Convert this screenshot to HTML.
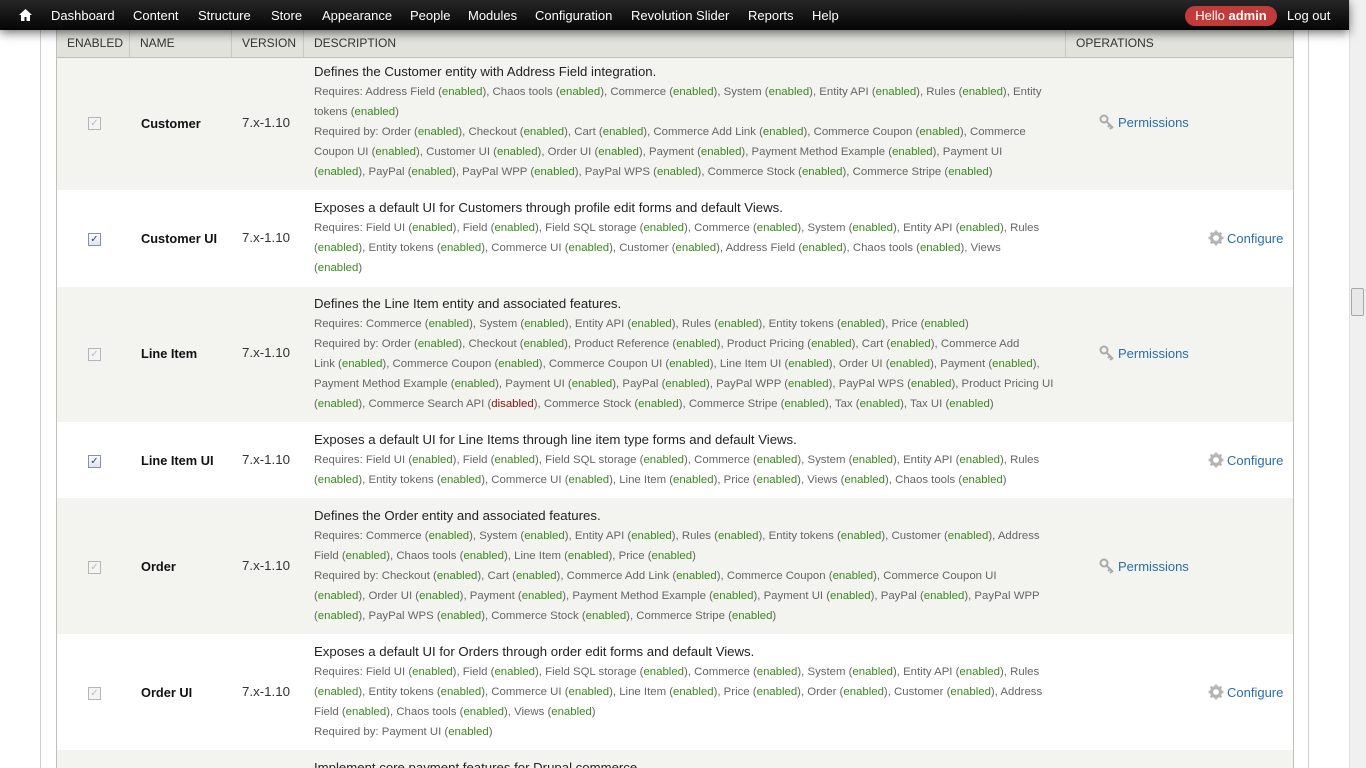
<!DOCTYPE html>
<html><head><meta charset="utf-8">
<style>
*{margin:0;padding:0;box-sizing:border-box}
html,body{width:1366px;height:768px;overflow:hidden}
body{background:#fff;font-family:"Liberation Sans","DejaVu Sans",sans-serif;position:relative;color:#333}
#tb{position:absolute;left:0;top:0;width:1349px;height:30px;background:linear-gradient(#262626,#050505);box-shadow:0 3px 10px rgba(0,0,0,.55);z-index:5}
#tb a{position:absolute;top:8px;color:#fff;font-size:13px;text-decoration:none;white-space:nowrap}
#hello{position:absolute;left:1185px;top:6px;width:92px;height:20px;border-radius:10px;background:#c23b3b;color:#fff;font-size:13px;line-height:20px;text-align:center}
#sb{position:absolute;left:1349px;top:0;width:17px;height:768px;background:#f0f0f0;border-left:1px solid #e0e0e0}
#thumb{position:absolute;left:1351px;top:288px;width:13px;height:28px;background:#e8e8e8;border:1px solid #a8a8a8;border-radius:2px}
.vl{position:absolute;top:0;height:768px;width:1px;background:#cfcfcf}
#hdr{position:absolute;left:56px;top:30px;width:1238px;height:28px;background:#e2e2dd;border:1px solid #bebfb9;border-top:none}
#hdr div{position:absolute;top:0;height:27px;line-height:27px;font-size:12px;color:#333;padding-left:10px;border-right:1px solid #c8c8c2}
.row{position:absolute;left:56px;width:1238px;border-left:1px solid #bebfb9;border-right:1px solid #bebfb9;overflow:hidden}
.g{background:#f3f3ef}.w{background:#fff}
.cb{position:absolute;left:31px;width:13px;height:13px;border:1px solid #b5b5b5;background:#f4f4f4;font-size:10px;line-height:11px;text-align:center;color:#bbb}
.cb.on{border-color:#8a8fa8;background:linear-gradient(#fff,#dfe3ee);color:#2a3d8f;font-weight:bold}
.nm{position:absolute;left:84px;font-size:12.8px;font-weight:bold;color:#111}
.ver{position:absolute;left:185px;font-size:13.3px;color:#333}
.d{position:absolute;left:257px;white-space:nowrap;line-height:20px;font-size:11.4px;color:#666}
.d b{font-weight:normal;font-size:13.2px;color:#222;display:block}
i{font-style:normal;color:#3a8a1e}
i.x{color:#8b1010}
.op{position:absolute;font-size:13px;color:#2a6ea8}
.op svg{position:absolute;left:-19px;top:-1px}
</style></head><body>
<div class="vl" style="left:40px"></div>
<div class="vl" style="left:1308px"></div>
<div id="sb"></div><div id="thumb"></div>

<div id="hdr">
<div style="left:0;width:73px">ENABLED</div>
<div style="left:73px;width:102px">NAME</div>
<div style="left:175px;width:72px">VERSION</div>
<div style="left:247px;width:762px">DESCRIPTION</div>
<div style="left:1009px;width:228px;border-right:none">OPERATIONS</div>
</div>

<!-- R1 -->
<div class="row g" style="top:58px;height:132px">
<div class="cb" style="top:59px">✓</div><div class="nm" style="top:58px">Customer</div><div class="ver" style="top:57px">7.x-1.10</div>
<div class="d" style="top:4px"><b>Defines the Customer entity with Address Field integration.</b>Requires: Address Field (<i>enabled</i>), Chaos tools (<i>enabled</i>), Commerce (<i>enabled</i>), System (<i>enabled</i>), Entity API (<i>enabled</i>), Rules (<i>enabled</i>), Entity<br>tokens (<i>enabled</i>)<br>Required by: Order (<i>enabled</i>), Checkout (<i>enabled</i>), Cart (<i>enabled</i>), Commerce Add Link (<i>enabled</i>), Commerce Coupon (<i>enabled</i>), Commerce<br>Coupon UI (<i>enabled</i>), Customer UI (<i>enabled</i>), Order UI (<i>enabled</i>), Payment (<i>enabled</i>), Payment Method Example (<i>enabled</i>), Payment UI<br>(<i>enabled</i>), PayPal (<i>enabled</i>), PayPal WPP (<i>enabled</i>), PayPal WPS (<i>enabled</i>), Commerce Stock (<i>enabled</i>), Commerce Stripe (<i>enabled</i>)</div>
<div class="op" style="left:1061px;top:57px"><svg width="16" height="16" viewBox="0 0 16 16"><circle cx="5" cy="5" r="3.5" fill="none" stroke="#aaa" stroke-width="2"/><path d="M7.5 7.5 L14 14 M11 11 l-2 2 M13 13 l-2 2" stroke="#aaa" stroke-width="2"/></svg>Permissions</div>
</div>
<!-- R2 -->
<div class="row w" style="top:190px;height:97px">
<div class="cb on" style="top:43px">✓</div><div class="nm" style="top:41px">Customer UI</div><div class="ver" style="top:40px">7.x-1.10</div>
<div class="d" style="top:8px"><b>Exposes a default UI for Customers through profile edit forms and default Views.</b>Requires: Field UI (<i>enabled</i>), Field (<i>enabled</i>), Field SQL storage (<i>enabled</i>), Commerce (<i>enabled</i>), System (<i>enabled</i>), Entity API (<i>enabled</i>), Rules<br>(<i>enabled</i>), Entity tokens (<i>enabled</i>), Commerce UI (<i>enabled</i>), Customer (<i>enabled</i>), Address Field (<i>enabled</i>), Chaos tools (<i>enabled</i>), Views<br>(<i>enabled</i>)</div>
<div class="op" style="left:1170px;top:41px"><svg width="16" height="16" viewBox="0 0 16 16"><circle cx="8" cy="8" r="4.5" fill="none" stroke="#b5b5b5" stroke-width="3.2"/><path d="M8 0.5V3.5M8 12.5V15.5M0.5 8H3.5M12.5 8H15.5M2.7 2.7L4.8 4.8M11.2 11.2L13.3 13.3M2.7 13.3L4.8 11.2M11.2 4.8L13.3 2.7" stroke="#b5b5b5" stroke-width="2.4"/></svg>Configure</div>
</div>
<!-- R3 -->
<div class="row g" style="top:287px;height:135px">
<div class="cb" style="top:61px">✓</div><div class="nm" style="top:59px">Line Item</div><div class="ver" style="top:58px">7.x-1.10</div>
<div class="d" style="top:7px"><b>Defines the Line Item entity and associated features.</b>Requires: Commerce (<i>enabled</i>), System (<i>enabled</i>), Entity API (<i>enabled</i>), Rules (<i>enabled</i>), Entity tokens (<i>enabled</i>), Price (<i>enabled</i>)<br>Required by: Order (<i>enabled</i>), Checkout (<i>enabled</i>), Product Reference (<i>enabled</i>), Product Pricing (<i>enabled</i>), Cart (<i>enabled</i>), Commerce Add<br>Link (<i>enabled</i>), Commerce Coupon (<i>enabled</i>), Commerce Coupon UI (<i>enabled</i>), Line Item UI (<i>enabled</i>), Order UI (<i>enabled</i>), Payment (<i>enabled</i>),<br>Payment Method Example (<i>enabled</i>), Payment UI (<i>enabled</i>), PayPal (<i>enabled</i>), PayPal WPP (<i>enabled</i>), PayPal WPS (<i>enabled</i>), Product Pricing UI<br>(<i>enabled</i>), Commerce Search API (<i class="x">disabled</i>), Commerce Stock (<i>enabled</i>), Commerce Stripe (<i>enabled</i>), Tax (<i>enabled</i>), Tax UI (<i>enabled</i>)</div>
<div class="op" style="left:1061px;top:59px"><svg width="16" height="16" viewBox="0 0 16 16"><circle cx="5" cy="5" r="3.5" fill="none" stroke="#aaa" stroke-width="2"/><path d="M7.5 7.5 L14 14 M11 11 l-2 2 M13 13 l-2 2" stroke="#aaa" stroke-width="2"/></svg>Permissions</div>
</div>
<!-- R4 -->
<div class="row w" style="top:422px;height:76px">
<div class="cb on" style="top:33px">✓</div><div class="nm" style="top:31px">Line Item UI</div><div class="ver" style="top:30px">7.x-1.10</div>
<div class="d" style="top:8px"><b>Exposes a default UI for Line Items through line item type forms and default Views.</b>Requires: Field UI (<i>enabled</i>), Field (<i>enabled</i>), Field SQL storage (<i>enabled</i>), Commerce (<i>enabled</i>), System (<i>enabled</i>), Entity API (<i>enabled</i>), Rules<br>(<i>enabled</i>), Entity tokens (<i>enabled</i>), Commerce UI (<i>enabled</i>), Line Item (<i>enabled</i>), Price (<i>enabled</i>), Views (<i>enabled</i>), Chaos tools (<i>enabled</i>)</div>
<div class="op" style="left:1170px;top:31px"><svg width="16" height="16" viewBox="0 0 16 16"><circle cx="8" cy="8" r="4.5" fill="none" stroke="#b5b5b5" stroke-width="3.2"/><path d="M8 0.5V3.5M8 12.5V15.5M0.5 8H3.5M12.5 8H15.5M2.7 2.7L4.8 4.8M11.2 11.2L13.3 13.3M2.7 13.3L4.8 11.2M11.2 4.8L13.3 2.7" stroke="#b5b5b5" stroke-width="2.4"/></svg>Configure</div>
</div>
<!-- R5 -->
<div class="row g" style="top:498px;height:136px">
<div class="cb" style="top:63px">✓</div><div class="nm" style="top:61px">Order</div><div class="ver" style="top:60px">7.x-1.10</div>
<div class="d" style="top:8px"><b>Defines the Order entity and associated features.</b>Requires: Commerce (<i>enabled</i>), System (<i>enabled</i>), Entity API (<i>enabled</i>), Rules (<i>enabled</i>), Entity tokens (<i>enabled</i>), Customer (<i>enabled</i>), Address<br>Field (<i>enabled</i>), Chaos tools (<i>enabled</i>), Line Item (<i>enabled</i>), Price (<i>enabled</i>)<br>Required by: Checkout (<i>enabled</i>), Cart (<i>enabled</i>), Commerce Add Link (<i>enabled</i>), Commerce Coupon (<i>enabled</i>), Commerce Coupon UI<br>(<i>enabled</i>), Order UI (<i>enabled</i>), Payment (<i>enabled</i>), Payment Method Example (<i>enabled</i>), Payment UI (<i>enabled</i>), PayPal (<i>enabled</i>), PayPal WPP<br>(<i>enabled</i>), PayPal WPS (<i>enabled</i>), Commerce Stock (<i>enabled</i>), Commerce Stripe (<i>enabled</i>)</div>
<div class="op" style="left:1061px;top:61px"><svg width="16" height="16" viewBox="0 0 16 16"><circle cx="5" cy="5" r="3.5" fill="none" stroke="#aaa" stroke-width="2"/><path d="M7.5 7.5 L14 14 M11 11 l-2 2 M13 13 l-2 2" stroke="#aaa" stroke-width="2"/></svg>Permissions</div>
</div>
<!-- R6 -->
<div class="row w" style="top:634px;height:116px">
<div class="cb" style="top:53px">✓</div><div class="nm" style="top:51px">Order UI</div><div class="ver" style="top:50px">7.x-1.10</div>
<div class="d" style="top:8px"><b>Exposes a default UI for Orders through order edit forms and default Views.</b>Requires: Field UI (<i>enabled</i>), Field (<i>enabled</i>), Field SQL storage (<i>enabled</i>), Commerce (<i>enabled</i>), System (<i>enabled</i>), Entity API (<i>enabled</i>), Rules<br>(<i>enabled</i>), Entity tokens (<i>enabled</i>), Commerce UI (<i>enabled</i>), Line Item (<i>enabled</i>), Price (<i>enabled</i>), Order (<i>enabled</i>), Customer (<i>enabled</i>), Address<br>Field (<i>enabled</i>), Chaos tools (<i>enabled</i>), Views (<i>enabled</i>)<br>Required by: Payment UI (<i>enabled</i>)</div>
<div class="op" style="left:1170px;top:51px"><svg width="16" height="16" viewBox="0 0 16 16"><circle cx="8" cy="8" r="4.5" fill="none" stroke="#b5b5b5" stroke-width="3.2"/><path d="M8 0.5V3.5M8 12.5V15.5M0.5 8H3.5M12.5 8H15.5M2.7 2.7L4.8 4.8M11.2 11.2L13.3 13.3M2.7 13.3L4.8 11.2M11.2 4.8L13.3 2.7" stroke="#b5b5b5" stroke-width="2.4"/></svg>Configure</div>
</div>
<!-- R7 -->
<div class="row g" style="top:750px;height:18px">
<div class="d" style="top:8px"><b>Implement core payment features for Drupal commerce.</b></div>
</div>

<div id="tb">
<svg style="position:absolute;left:19px;top:9px" width="13" height="12" viewBox="0 0 13 12"><path d="M6.5 0L0 6h2v6h3.5V8h2v4H11V6h2z" fill="#fff"/></svg>
<a style="left:51px">Dashboard</a><a style="left:133px">Content</a><a style="left:198px">Structure</a><a style="left:271px">Store</a><a style="left:322px">Appearance</a><a style="left:410px">People</a><a style="left:468px">Modules</a><a style="left:535px">Configuration</a><a style="left:631px">Revolution Slider</a><a style="left:748px">Reports</a><a style="left:812px">Help</a>
<div id="hello">Hello <b>admin</b></div>
<a style="left:1287px">Log out</a>
</div>
</body></html>
